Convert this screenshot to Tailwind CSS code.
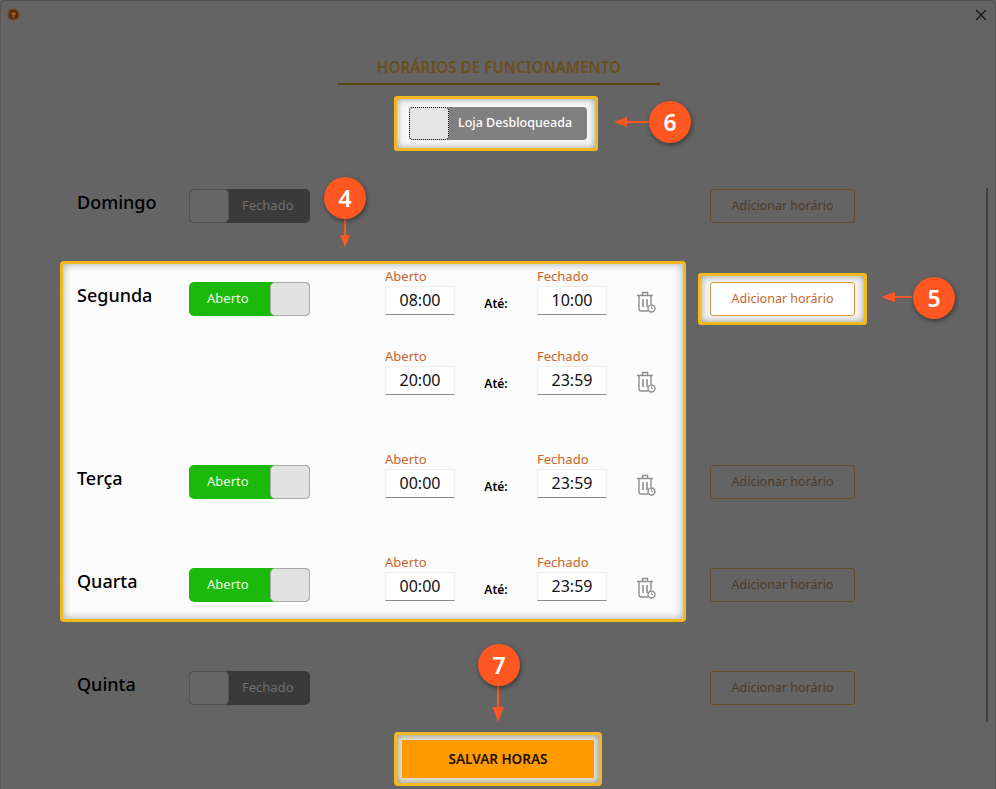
<!DOCTYPE html>
<html lang="pt">
<head>
<meta charset="utf-8">
<title>Horários de funcionamento</title>
<script src="https://cdn.jsdelivr.net/npm/@tailwindcss/browser@4"></script>
</head>
<body class="m-0 overflow-hidden bg-[#646464]">
<div class="relative h-[789px] w-[996px] overflow-hidden rounded-t-[6px] border-t border-[#4c4c4c] bg-[#646464] font-['Noto_Sans',sans-serif] text-black shadow-[inset_1px_0_0_#555555,inset_-1px_0_0_#555555]">

  <!-- title bar -->
  <div class="flex h-[27px] items-center justify-between pl-[7px] pr-[9px]">
    <svg class="h-[13px] w-[13px]" viewBox="0 0 13 13"><circle cx="6.5" cy="6.5" r="6" fill="#7a3f14"/><circle cx="6.5" cy="6.5" r="4.6" fill="#4f2c12"/><path d="M3.5 6 C4.5 3.5 8.5 3.5 9.500 6 L7.500 7 L7.500 10 L5.500 10 L5.500 7 Z" fill="#a0591f"/></svg>
    <svg class="h-[12px] w-[12px]" viewBox="0 0 12 12"><path d="M1 1 L11 11 M11 1 L1 11" stroke="#111" stroke-width="1.1"/></svg>
  </div>

  <!-- heading -->
  <div class="ml-[338px] mt-[29px] w-[322px] border-b-2 border-[#5e3f12] pb-[6px] text-center text-[15.3px] font-semibold leading-[20px] text-[#6d4d1c]">HORÁRIOS DE FUNCIONAMENTO</div>

  <!-- lock toggle -->
  <div class="ml-[394px] mt-[11px] h-[55px] w-[204px] rounded-[3px] border-[3px] border-[#f4b71e] bg-[#f8f8f8] pl-[12px] pt-[8px] shadow-[inset_0_0_7px_rgba(0,0,0,0.4)]">
    <div class="flex h-[33px] w-[178px] items-center rounded-[4px] bg-[#808080]">
      <div class="h-[33px] w-[40px] rounded-[4px] border border-dotted border-black bg-[#e4e4e4]"></div>
      <span class="ml-[9px] text-[12.5px] font-medium text-white">Loja Desbloqueada</span>
    </div>
  </div>

  <!-- day rows -->
  <div class="ml-[60px] mt-[23px] w-[808px]">
    <!-- Domingo -->
    <div class="flex h-[49px] pl-[17px]">
      <div class="mt-[16px] w-[112px] text-[18px] font-medium leading-[24px]">Domingo</div>
      <div class="mt-[15px] flex h-[34px] w-[121px] items-center rounded-[5px] bg-[#3a3a3a]">
        <div class="h-[34px] w-[40px] rounded-[5px] border border-[#505050] bg-[#666666]"></div>
        <span class="ml-[13px] text-[13px] text-[#707070]">Fechado</span>
      </div>
      <div class="ml-[400px] mt-[15px] flex h-[34px] w-[145px] items-center justify-center rounded-[3px] border border-[#674c28] text-[12.5px] text-[#4e3a28]">Adicionar horário</div>
    </div>

    <div class="mt-[38px] flex items-start">
      <!-- highlighted panel -->
      <div class="h-[361px] w-[626px] rounded-[4px] border-[3px] border-[#f4b71e] bg-[#fcfcfc] pb-[18px] pl-[14px] pt-[3px] shadow-[inset_0_0_8px_rgba(0,0,0,0.35)]">

        <!-- Segunda -->
        <div class="flex h-[48px]">
          <div class="mt-[16px] w-[112px] text-[18px] font-medium leading-[24px]">Segunda</div>
          <div class="mt-[15px] flex h-[34px] w-[121px] items-center rounded-[5px] bg-[#1ab90a]">
            <span class="ml-[18px] w-[63px] text-[13px] text-[#eafbe8]">Aberto</span>
            <div class="h-[34px] w-[40px] rounded-[5px] border border-[#aaaaaa] bg-[#e2e2e2]"></div>
          </div>
          <div class="ml-[75px] w-[70px]">
            <div class="h-[19px] text-[13px] leading-[18px] text-[#c8642a]">Aberto</div>
            <div class="flex h-[29px] items-center justify-center border border-b-[#888888] border-x-[#eeeeee] border-t-[#eeeeee] bg-white pb-[2px] text-[16px] text-[#111111]">08:00</div>
          </div>
          <div class="mt-[28px] w-[82px] text-center text-[12px] font-semibold leading-[18px]">Até:</div>
          <div class="w-[70px]">
            <div class="h-[19px] text-[13px] leading-[18px] text-[#c8642a]">Fechado</div>
            <div class="flex h-[29px] items-center justify-center border border-b-[#888888] border-x-[#eeeeee] border-t-[#eeeeee] bg-white pb-[2px] text-[16px] text-[#111111]">10:00</div>
          </div>
          <svg class="ml-[29px] mt-[24px] h-[22px] w-[20px]" viewBox="0 0 20 22" fill="none" stroke="#8f8f8f" stroke-width="1.4"><path d="M1 4.5 H17 M6.5 4.500 V1.500 H11.500 V4.500 M3 4.500 V18 Q3 20 5 20 H12 M15 4.500 V13"/><path d="M7 8 V16 M11 8 V16" stroke-width="1.6"/><circle cx="15.500" cy="17.500" r="3.500"/><path d="M15.500 15.500 V17.500 H17" stroke-width="1"/></svg>
        </div>

        <!-- Segunda, second range -->
        <div class="mt-[32px] flex h-[48px] pl-[233px]">
          <div class="ml-[75px] w-[70px]">
            <div class="h-[19px] text-[13px] leading-[18px] text-[#c8642a]">Aberto</div>
            <div class="flex h-[29px] items-center justify-center border border-b-[#888888] border-x-[#eeeeee] border-t-[#eeeeee] bg-white pb-[2px] text-[16px] text-[#111111]">20:00</div>
          </div>
          <div class="mt-[28px] w-[82px] text-center text-[12px] font-semibold leading-[18px]">Até:</div>
          <div class="w-[70px]">
            <div class="h-[19px] text-[13px] leading-[18px] text-[#c8642a]">Fechado</div>
            <div class="flex h-[29px] items-center justify-center border border-b-[#888888] border-x-[#eeeeee] border-t-[#eeeeee] bg-white pb-[2px] text-[16px] text-[#111111]">23:59</div>
          </div>
          <svg class="ml-[29px] mt-[24px] h-[22px] w-[20px]" viewBox="0 0 20 22" fill="none" stroke="#8f8f8f" stroke-width="1.4"><path d="M1 4.5 H17 M6.5 4.500 V1.500 H11.500 V4.500 M3 4.500 V18 Q3 20 5 20 H12 M15 4.500 V13"/><path d="M7 8 V16 M11 8 V16" stroke-width="1.6"/><circle cx="15.500" cy="17.500" r="3.500"/><path d="M15.500 15.500 V17.500 H17" stroke-width="1"/></svg>
        </div>

        <!-- Terça -->
        <div class="mt-[55px] flex h-[48px]">
          <div class="mt-[16px] w-[112px] text-[18px] font-medium leading-[24px]">Terça</div>
          <div class="mt-[15px] flex h-[34px] w-[121px] items-center rounded-[5px] bg-[#1ab90a]">
            <span class="ml-[18px] w-[63px] text-[13px] text-[#eafbe8]">Aberto</span>
            <div class="h-[34px] w-[40px] rounded-[5px] border border-[#aaaaaa] bg-[#e2e2e2]"></div>
          </div>
          <div class="ml-[75px] w-[70px]">
            <div class="h-[19px] text-[13px] leading-[18px] text-[#c8642a]">Aberto</div>
            <div class="flex h-[29px] items-center justify-center border border-b-[#888888] border-x-[#eeeeee] border-t-[#eeeeee] bg-white pb-[2px] text-[16px] text-[#111111]">00:00</div>
          </div>
          <div class="mt-[28px] w-[82px] text-center text-[12px] font-semibold leading-[18px]">Até:</div>
          <div class="w-[70px]">
            <div class="h-[19px] text-[13px] leading-[18px] text-[#c8642a]">Fechado</div>
            <div class="flex h-[29px] items-center justify-center border border-b-[#888888] border-x-[#eeeeee] border-t-[#eeeeee] bg-white pb-[2px] text-[16px] text-[#111111]">23:59</div>
          </div>
          <svg class="ml-[29px] mt-[24px] h-[22px] w-[20px]" viewBox="0 0 20 22" fill="none" stroke="#8f8f8f" stroke-width="1.4"><path d="M1 4.5 H17 M6.5 4.500 V1.500 H11.500 V4.500 M3 4.500 V18 Q3 20 5 20 H12 M15 4.500 V13"/><path d="M7 8 V16 M11 8 V16" stroke-width="1.6"/><circle cx="15.500" cy="17.500" r="3.500"/><path d="M15.500 15.500 V17.500 H17" stroke-width="1"/></svg>
        </div>

        <!-- Quarta -->
        <div class="mt-[55px] flex h-[48px]">
          <div class="mt-[16px] w-[112px] text-[18px] font-medium leading-[24px]">Quarta</div>
          <div class="mt-[15px] flex h-[34px] w-[121px] items-center rounded-[5px] bg-[#1ab90a]">
            <span class="ml-[18px] w-[63px] text-[13px] text-[#eafbe8]">Aberto</span>
            <div class="h-[34px] w-[40px] rounded-[5px] border border-[#aaaaaa] bg-[#e2e2e2]"></div>
          </div>
          <div class="ml-[75px] w-[70px]">
            <div class="h-[19px] text-[13px] leading-[18px] text-[#c8642a]">Aberto</div>
            <div class="flex h-[29px] items-center justify-center border border-b-[#888888] border-x-[#eeeeee] border-t-[#eeeeee] bg-white pb-[2px] text-[16px] text-[#111111]">00:00</div>
          </div>
          <div class="mt-[28px] w-[82px] text-center text-[12px] font-semibold leading-[18px]">Até:</div>
          <div class="w-[70px]">
            <div class="h-[19px] text-[13px] leading-[18px] text-[#c8642a]">Fechado</div>
            <div class="flex h-[29px] items-center justify-center border border-b-[#888888] border-x-[#eeeeee] border-t-[#eeeeee] bg-white pb-[2px] text-[16px] text-[#111111]">23:59</div>
          </div>
          <svg class="ml-[29px] mt-[24px] h-[22px] w-[20px]" viewBox="0 0 20 22" fill="none" stroke="#8f8f8f" stroke-width="1.4"><path d="M1 4.5 H17 M6.5 4.500 V1.500 H11.500 V4.500 M3 4.500 V18 Q3 20 5 20 H12 M15 4.500 V13"/><path d="M7 8 V16 M11 8 V16" stroke-width="1.6"/><circle cx="15.500" cy="17.500" r="3.500"/><path d="M15.500 15.500 V17.500 H17" stroke-width="1"/></svg>
        </div>
      </div>

      <!-- add buttons column -->
      <div class="ml-[12px] mt-[12px] w-[169px]">
        <div class="h-[52px] rounded-[3px] border-[3px] border-[#f4b71e] bg-[#f4f4f4] pl-[9px] pt-[6px] shadow-[inset_0_0_7px_rgba(0,0,0,0.4)]">
          <div class="flex h-[34px] w-[145px] items-center justify-center rounded-[3px] border border-[#d9983f] bg-white text-[12.5px] text-[#c8642a]">Adicionar horário</div>
        </div>
        <div class="ml-[12px] mt-[140px] flex h-[34px] w-[145px] items-center justify-center rounded-[3px] border border-[#674c28] text-[12.5px] text-[#4e3a28]">Adicionar horário</div>
        <div class="ml-[12px] mt-[69px] flex h-[34px] w-[145px] items-center justify-center rounded-[3px] border border-[#674c28] text-[12.5px] text-[#4e3a28]">Adicionar horário</div>
      </div>
    </div>

    <!-- Quinta -->
    <div class="mt-[34px] flex h-[49px] pl-[17px]">
      <div class="mt-[16px] w-[112px] text-[18px] font-medium leading-[24px]">Quinta</div>
      <div class="mt-[15px] flex h-[34px] w-[121px] items-center rounded-[5px] bg-[#3a3a3a]">
        <div class="h-[34px] w-[40px] rounded-[5px] border border-[#505050] bg-[#666666]"></div>
        <span class="ml-[13px] text-[13px] text-[#707070]">Fechado</span>
      </div>
      <div class="ml-[400px] mt-[15px] flex h-[34px] w-[145px] items-center justify-center rounded-[3px] border border-[#674c28] text-[12.5px] text-[#4e3a28]">Adicionar horário</div>
    </div>
  </div>

  <!-- save -->
  <div class="ml-[394px] mt-[27px] h-[54px] w-[208px] rounded-[4px] border-[3px] border-[#f4b71e] bg-[#e6e2d2] pl-[5px] pt-[5px] shadow-[inset_0_0_6px_rgba(0,0,0,0.4)]">
    <div class="flex h-[38px] w-[192px] items-center justify-center bg-[#ff9a00] text-[13.5px] font-semibold text-[#1c0f00]">SALVAR HORAS</div>
  </div>

  <!-- scrollbar -->
  <div class="absolute left-[986px] top-[187px] h-[534px] w-[2px] bg-[#3e3e3e]"></div>

  <!-- annotation arrows -->
  <svg class="absolute left-0 top-0 h-[789px] w-[996px]" viewBox="0 0 996 789" fill="#ff5722" stroke="none">
    <path d="M650 121 H625" stroke="#ff5722" stroke-width="2"/><path d="M614 121 L627 116 V126 Z"/>
    <path d="M345 218 V236" stroke="#ff5722" stroke-width="2"/><path d="M345 246 L340 234 H350 Z"/>
    <path d="M912 296 H892" stroke="#ff5722" stroke-width="2"/><path d="M881 296 L895 291 V301 Z"/>
    <path d="M498 685 V708" stroke="#ff5722" stroke-width="2"/><path d="M498 721 L492.500 706 H504 Z"/>
  </svg>

  <!-- annotation badges -->
  <div class="absolute left-[649px] top-[100px] flex h-[42px] w-[42px] items-center justify-center rounded-full bg-[#ff5722] text-[23px] font-semibold text-white shadow-[1px_2px_5px_rgba(0,0,0,0.45)]">6</div>
  <div class="absolute left-[324px] top-[176px] flex h-[42px] w-[42px] items-center justify-center rounded-full bg-[#ff5722] text-[23px] font-semibold text-white shadow-[1px_2px_5px_rgba(0,0,0,0.45)]">4</div>
  <div class="absolute left-[913px] top-[276px] flex h-[42px] w-[42px] items-center justify-center rounded-full bg-[#ff5722] text-[23px] font-semibold text-white shadow-[1px_2px_5px_rgba(0,0,0,0.45)]">5</div>
  <div class="absolute left-[478px] top-[643px] flex h-[42px] w-[42px] items-center justify-center rounded-full bg-[#ff5722] text-[23px] font-semibold text-white shadow-[1px_2px_5px_rgba(0,0,0,0.45)]">7</div>
</div>
</body>
</html>
